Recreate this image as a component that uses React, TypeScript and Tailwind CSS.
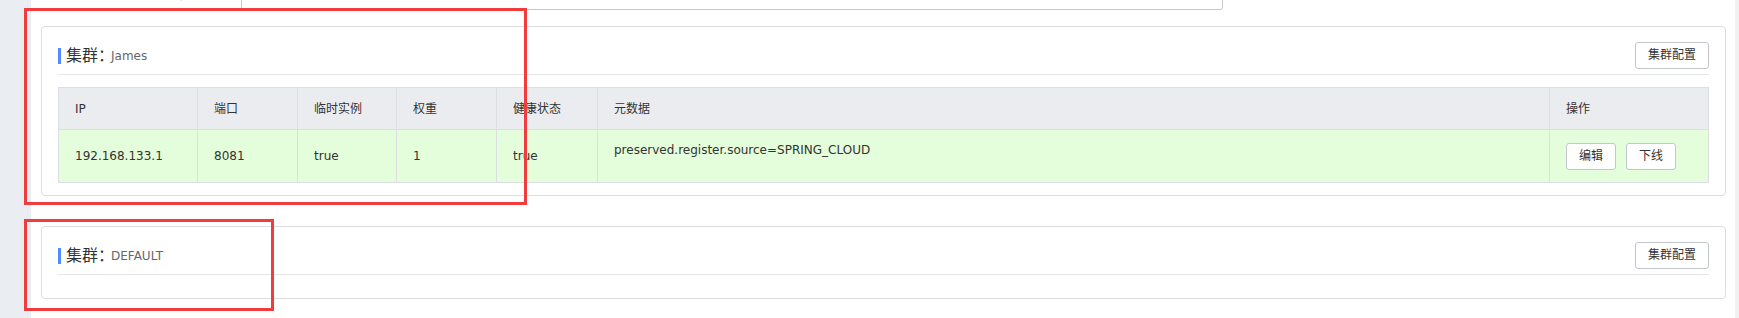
import React from 'react';

type Instance = {
  ip: string;
  port: string;
  ephemeral: string;
  weight: string;
  healthy: string;
  metadata: string;
};

const instances: Instance[] = [
  {
    ip: '192.168.133.1',
    port: '8081',
    ephemeral: 'true',
    weight: '1',
    healthy: 'true',
    metadata: 'preserved.register.source=SPRING_CLOUD',
  },
];

const columns = ['IP', '端口', '临时实例', '权重', '健康状态', '元数据', '操作'];

const SmallButton: React.FC<{ children: React.ReactNode }> = ({ children }) => (
  <button className="h-[27px] rounded-[3px] border border-[#c4c6cf] bg-white px-[12px] text-[12px] leading-[25px] text-[#333]">
    {children}
  </button>
);

const ClusterHeader: React.FC<{ name: string }> = ({ name }) => (
  <div className="flex items-center justify-between border-b border-[#e6e7eb] pb-[5px]">
    <div className="flex items-center">
      <span className="h-[16px] w-[3px] bg-[#4e8cff]" />
      <span className="ml-[5px] text-[16px] leading-[20px] text-[#333]">集群：</span>
      <span className="-ml-[3px] text-[12px] text-[#666]">{name}</span>
    </div>
    <SmallButton>集群配置</SmallButton>
  </div>
);

const App: React.FC = () => {
  return (
    <div className="relative flex h-[318px] w-[1739px] overflow-hidden bg-white font-['DejaVu_Sans','Noto_Sans_CJK_SC',sans-serif] text-[12px] text-[#333]">
      {/* left nav edge */}
      <div className="w-[31px] shrink-0 bg-[#eaedf1]" />

      <div className="flex-1 pl-[10px] pr-[9px]">
        {/* form row, scrolled mostly out of view */}
        <div className="-mt-[18px] flex h-[28px]">
          <div className="w-[200px] shrink-0 pr-[14px] text-right leading-[27px]">服务路由类型:</div>
          <div className="h-[28px] w-[982px] rounded-[3px] border border-[#c4c6cf] px-[8px] leading-[27px]">none</div>
        </div>

        {/* cluster James */}
        <div className="mt-[16px] rounded-[4px] border border-[#dcdee3] px-[16px] pt-[15px] pb-[12px]">
          <ClusterHeader name="James" />
          <table className="mt-[12px] w-full table-fixed border-collapse border border-[#dcdee3]">
            <colgroup>
              <col className="w-[139px]" />
              <col className="w-[100px]" />
              <col className="w-[99px]" />
              <col className="w-[100px]" />
              <col className="w-[101px]" />
              <col className="w-[952px]" />
              <col />
            </colgroup>
            <thead>
              <tr className="h-[42px] bg-[#ebecf0]">
                {columns.map((c) => (
                  <th key={c} className="border border-[#dcdee3] pl-[16px] text-left font-normal">
                    {c}
                  </th>
                ))}
              </tr>
            </thead>
            <tbody>
              {instances.map((row) => (
                <tr key={row.ip} className="h-[53px] bg-[#e4fdda]">
                  <td className="border border-[#dcdee3] pl-[16px]">{row.ip}</td>
                  <td className="border border-[#dcdee3] pl-[16px]">{row.port}</td>
                  <td className="border border-[#dcdee3] pl-[16px]">{row.ephemeral}</td>
                  <td className="border border-[#dcdee3] pl-[16px]">{row.weight}</td>
                  <td className="border border-[#dcdee3] pl-[16px]">{row.healthy}</td>
                  <td className="border border-[#dcdee3] pl-[16px] pt-[12px] align-top leading-[16px]">{row.metadata}</td>
                  <td className="border border-[#dcdee3] pl-[16px]">
                    <div className="flex gap-[10px]">
                      <SmallButton>编辑</SmallButton>
                      <SmallButton>下线</SmallButton>
                    </div>
                  </td>
                </tr>
              ))}
            </tbody>
          </table>
        </div>

        {/* cluster DEFAULT */}
        <div className="mt-[30px] rounded-[4px] border border-[#dcdee3] px-[16px] pt-[15px] pb-[23px]">
          <ClusterHeader name="DEFAULT" />
        </div>
      </div>

      {/* scrollbar track */}
      <div className="w-[4px] shrink-0 bg-[#f1f1f1]" />

      {/* red annotation boxes */}
      <div className="absolute left-[24px] top-[8px] h-[197px] w-[503px] border-[3px] border-[#f03c3c]" />
      <div className="absolute left-[24px] top-[219px] h-[92px] w-[250px] border-[3px] border-[#f03c3c]" />
    </div>
  );
};

export default App;
